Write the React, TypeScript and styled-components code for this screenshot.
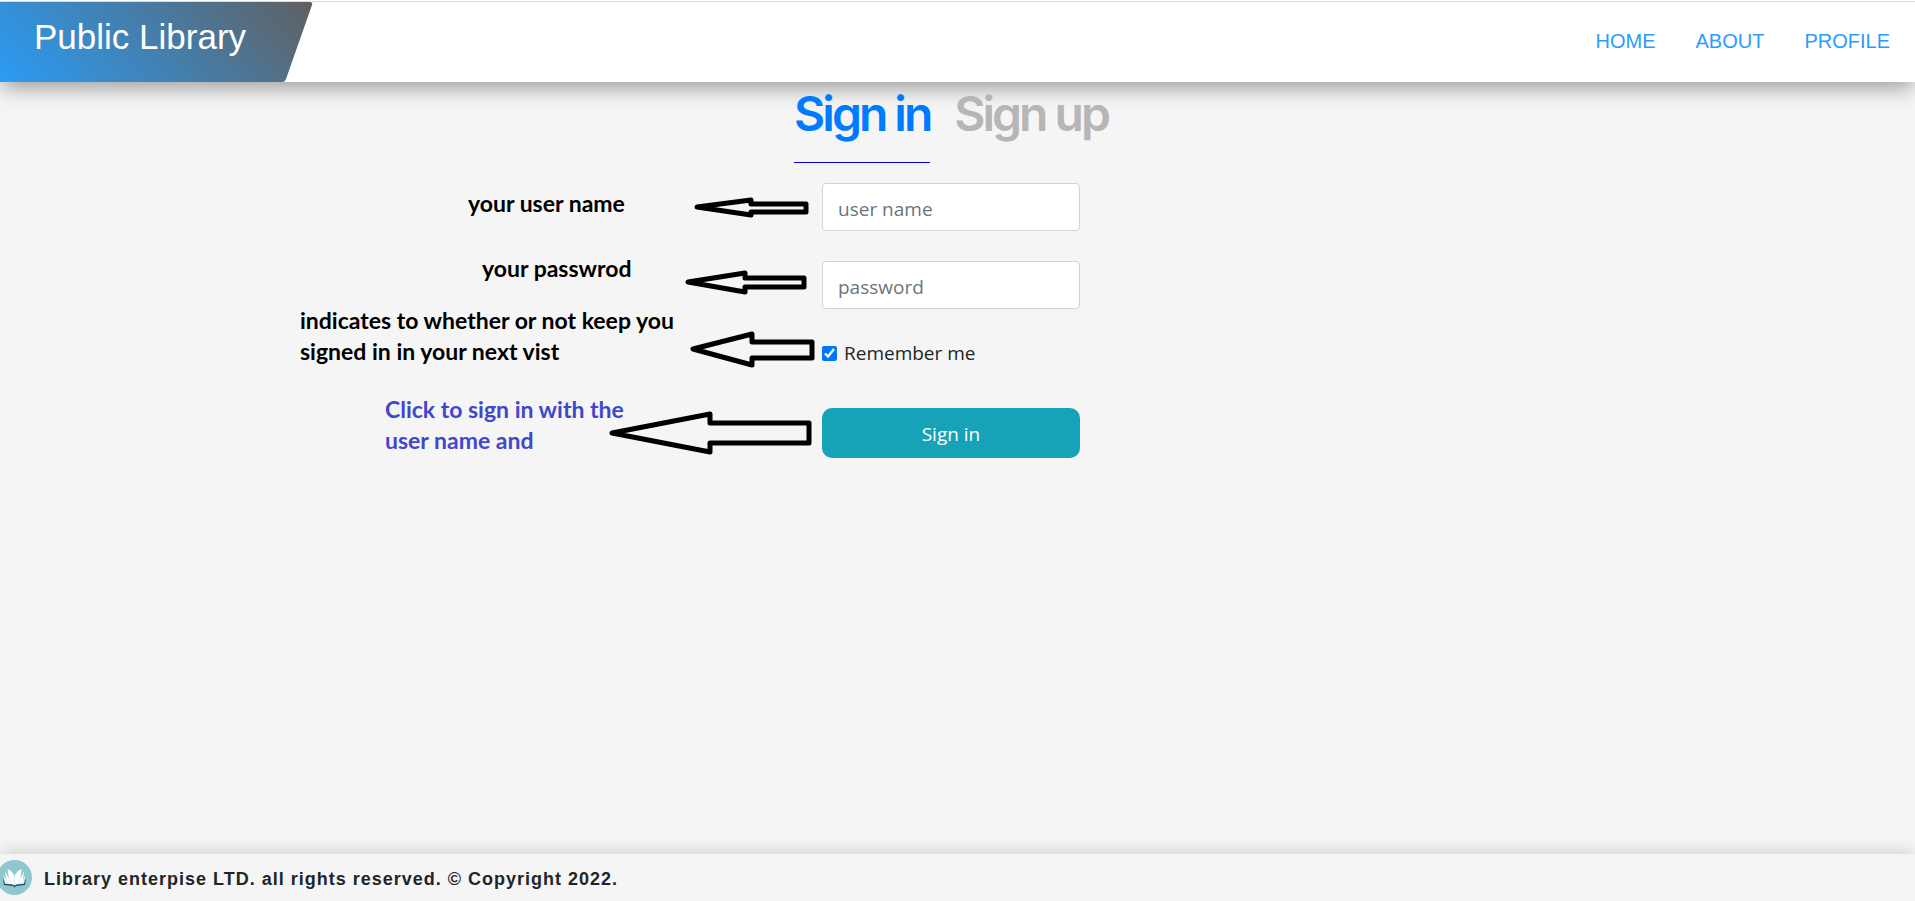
import React from 'react';
import styled, { createGlobalStyle } from 'styled-components';

const GlobalStyle = createGlobalStyle`
  *, *::before, *::after { box-sizing: border-box; }
  body {
    margin: 0;
    background: #f5f5f5;
    color: #212529;
    font-family: 'Open Sans', 'Noto Sans', sans-serif;
    font-size: 18px;
  }
`;

const Page = styled.div`
  display: flex;
  flex-direction: column;
  min-height: 100vh;
`;

const Header = styled.header`
  display: flex;
  justify-content: space-between;
  height: 82px;
  border-top: 1px solid #fff;
  background: #fff;
  box-shadow: 0 8px 20px -2px rgba(0, 0, 0, 0.36);
  font-family: 'Liberation Sans', Arial, sans-serif;
`;

const HeaderInner = styled.div`
  display: flex;
  flex: 1;
  justify-content: space-between;
  border-top: 1px solid #dadcdc;
`;

const Brand = styled.a`
  width: 313px;
  height: 80px;
  padding: 15px 0 0 34px;
  background: linear-gradient(45deg, #2a9cf6, #606060);
  clip-path: path('M0 0H310Q313 0 312 3L286 77Q285 80 282 80H0Z');
  color: #fff;
  font-size: 35px;
  line-height: 40px;
  text-decoration: none;
`;

const Nav = styled.nav`
  display: flex;
  align-items: center;
  gap: 40px;
  padding: 0 25px 2px 0;
`;

const NavLink = styled.a`
  color: #2a9cff;
  font-size: 20px;
  text-decoration: none;
`;

const Main = styled.main`
  flex: 1;
  padding-right: 13px;
`;

const Tabs = styled.div`
  display: flex;
  justify-content: center;
  gap: 24px;
  padding-top: 2px;
`;

const Tab = styled.button<{ $active?: boolean }>`
  height: 79px;
  padding: 0 0 18px;
  border: 0;
  border-bottom: 1px solid ${(p) => (p.$active ? '#0000e6' : 'transparent')};
  background: none;
  color: ${(p) => (p.$active ? '#007bff' : '#b6b6b6')};
  font-family: Inter, 'Liberation Sans', sans-serif;
  font-size: 48px;
  font-weight: 600;
  letter-spacing: -3px;
  line-height: 60px;
`;

const Guide = styled.div`
  display: grid;
  grid-template-columns: minmax(0, 1fr) 258px minmax(0, 1fr);
  align-items: start;
  padding-top: 20px;
`;

const Notes = styled.div`
  grid-area: 1 / 1;
  justify-self: end;
  width: 390px;
  margin: 5px 132px 0 0;
`;

const Note = styled.p<{ $indent: number; $top: number; $color?: string }>`
  margin: ${(p) => p.$top}px 0 0 ${(p) => p.$indent}px;
  color: ${(p) => p.$color ?? '#000'};
  font-family: Lato, sans-serif;
  font-size: 23px;
  font-weight: 700;
  line-height: 31px;
  white-space: nowrap;
`;

const Arrows = styled.div`
  grid-area: 1 / 1;
  justify-self: end;
  width: 206px;
  margin: 14px 7px 0 0;
`;

const Arrow = styled.svg<{ $top: number }>`
  display: block;
  margin-top: ${(p) => p.$top}px;
  fill: none;
  stroke: #000;
  stroke-width: 5px;
  stroke-linejoin: round;
`;

const Form = styled.form`
  grid-area: 1 / 2;
  display: flex;
  flex-direction: column;
`;

const Field = styled.input`
  width: 100%;
  height: 48px;
  margin-bottom: 30px;
  padding: 4px 15px 0;
  border: 1px solid #ced4da;
  border-radius: 4px;
  background: #fff;
  color: #495057;
  font-family: inherit;
  font-size: 19px;

  &::placeholder {
    color: #6c757d;
    opacity: 1;
  }
`;

const Remember = styled.label`
  display: flex;
  align-items: center;
  gap: 7px;
  height: 28px;
  margin: 0 0 41px;
  font-size: 19px;

  input {
    width: 15px;
    height: 15px;
    margin: 0;
    accent-color: #0075ff;
  }
`;

const Submit = styled.button`
  height: 50px;
  padding: 2px 0 0;
  border: 0;
  border-radius: 10px;
  background: #17a2b8;
  color: #fff;
  font-family: inherit;
  font-size: 19px;
  line-height: 28px;
`;

const Footer = styled.footer`
  display: flex;
  align-items: center;
  gap: 12px;
  height: 47px;
  background: #f5f5f5;
  box-shadow: 0 -4px 16px -2px rgba(0, 0, 0, 0.16);
  font-family: 'Liberation Sans', Arial, sans-serif;
  font-weight: 700;
`;

const Logo = styled.svg`
  margin-left: -3px;
`;

const Copyright = styled.p`
  margin: 0;
  padding-top: 3px;
  font-size: 18px;
  letter-spacing: 1px;
`;

const notes = [
  { lines: ['your user name'], indent: 168, top: 0 },
  { lines: ['your passwrod'], indent: 182, top: 34 },
  { lines: ['indicates to whether or not keep you', 'signed in in your next vist'], indent: 0, top: 21 },
  { lines: ['Click to sign in with the', 'user name and'], indent: 85, top: 27, color: '#3f48cc' },
];

const arrows = [
  { top: 0, height: 21, d: 'M88 10L142 3V7H197V15H142V18Z' },
  { top: 52, height: 25, d: 'M79 12L136 3V8H195V17H136V22Z' },
  { top: 36, height: 37, d: 'M84 18L143 3V11H203V27H143V34Z' },
  { top: 42, height: 47, d: 'M3 23L101 4V13H200V33H101V42Z' },
];

const BookLogo = () => (
  <Logo width="35" height="35" viewBox="0 0 35 35" aria-hidden="true">
    <circle cx="17.500" cy="17.500" r="17.500" fill="#8cc8cd" />
    <path d="M6 18L7 25L16 26L17.500 27.500L19 26L28 25L29 18L27 24L19 24.500L17.500 26L16 24.500L8 24Z" fill="#353d54" />
    <path d="M17.500 25Q14 23 8.500 23.500L6.500 15L9.500 20L8 11L12 19L10.500 9Q15.500 11 17.500 16Q19.500 11 24.500 9L23.500 19L27 11L26 20L28.500 15L26.500 23.500Q21 23 17.500 25Z" fill="#fff" />
    <path d="M17.500 16V25M12 19L14 23M23.500 19L21.500 23M9.500 20L10.500 23M26 20L25 23" stroke="#b9dcdf" strokeWidth=".6" fill="none" />
  </Logo>
);

export default function App() {
  return (
    <>
      <GlobalStyle />
      <Page>
        <Header>
          <HeaderInner>
            <Brand href="#">Public Library</Brand>
            <Nav>
              <NavLink href="#home">HOME</NavLink>
              <NavLink href="#about">ABOUT</NavLink>
              <NavLink href="#profile">PROFILE</NavLink>
            </Nav>
          </HeaderInner>
        </Header>
        <Main>
          <Tabs>
            <Tab type="button" $active>Sign in</Tab>
            <Tab type="button">Sign up</Tab>
          </Tabs>
          <Guide>
            <Notes>
              {notes.map((n) => (
                <Note key={n.lines[0]} $indent={n.indent} $top={n.top} $color={n.color}>
                  {n.lines.map((line, i) => (
                    <React.Fragment key={line}>
                      {i > 0 && <br />}
                      {line}
                    </React.Fragment>
                  ))}
                </Note>
              ))}
            </Notes>
            <Arrows aria-hidden="true">
              {arrows.map((a) => (
                <Arrow key={a.d} $top={a.top} width="206" height={a.height}>
                  <path d={a.d} />
                </Arrow>
              ))}
            </Arrows>
            <Form onSubmit={(e) => e.preventDefault()}>
              <Field type="text" placeholder="user name" aria-label="user name" />
              <Field type="password" placeholder="password" aria-label="password" />
              <Remember>
                <input type="checkbox" defaultChecked />
                Remember me
              </Remember>
              <Submit type="submit">Sign in</Submit>
            </Form>
          </Guide>
        </Main>
        <Footer>
          <BookLogo />
          <Copyright>Library enterpise LTD. all rights reserved. © Copyright 2022.</Copyright>
        </Footer>
      </Page>
    </>
  );
}
